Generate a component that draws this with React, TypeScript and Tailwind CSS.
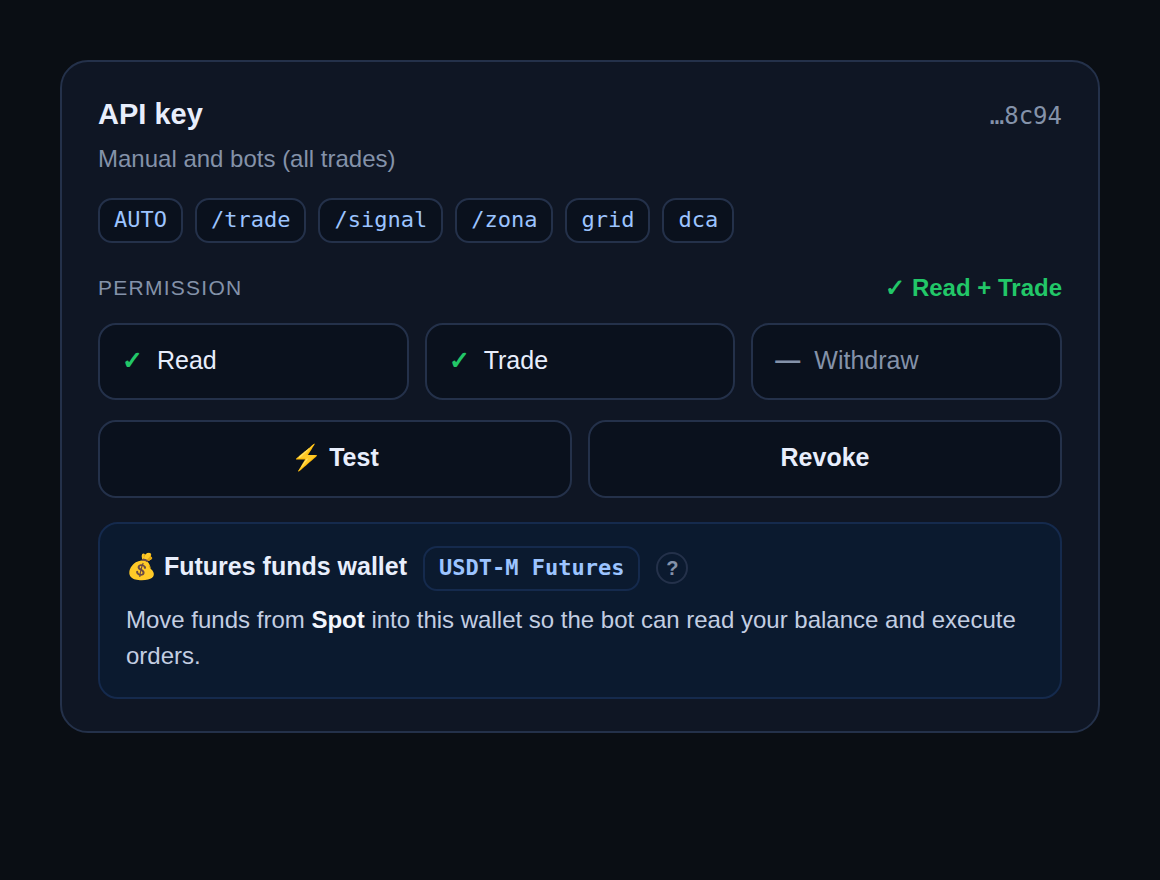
interface Permission {
  label: string;
  granted: boolean;
}

const commands = ["AUTO", "/trade", "/signal", "/zona", "grid", "dca"];

const permissions: Permission[] = [
  { label: "Read", granted: true },
  { label: "Trade", granted: true },
  { label: "Withdraw", granted: false },
];

const mono = "font-['DejaVu_Sans_Mono',monospace]";

function PermissionItem({ label, granted }: Permission) {
  return (
    <li
      className={`flex items-center gap-3.5 rounded-[18px] border-2 border-[#24314a] bg-[#0a111d] px-[22px] pb-6 pt-[21px] text-[25px] leading-7 ${
        granted ? "text-[#e8eefc]" : "text-[#8492a9]"
      }`}
    >
      <span className={granted ? "font-bold text-[#22c768]" : "font-bold"}>{granted ? "✓" : "—"}</span>
      {label}
    </li>
  );
}

function ActionButton({ children }: { children: string }) {
  return (
    <button
      type="button"
      className="rounded-[18px] border-2 border-[#24314a] bg-[#0a111d] px-6 pb-[25px] pt-[21px] text-[25px] font-bold leading-7 text-[#e8eefc]"
    >
      {children}
    </button>
  );
}

export default function App() {
  return (
    <main className="min-h-screen bg-[#0a0e14] p-[60px] font-['Liberation_Sans',Arial,sans-serif]">
      <section className="rounded-[28px] border-2 border-[#24314a] bg-[#0f1624] px-9 py-8">
        {/* Title row */}
        <div className="flex items-baseline justify-between">
          <h1 className="text-[29px] font-bold leading-10 text-[#e8eefc]">API key</h1>
          <span className={`${mono} text-2xl leading-9 text-[#8492a9]`}>…8c94</span>
        </div>
        <p className="mt-[7px] text-2xl leading-9 text-[#8492a9]">Manual and bots (all trades)</p>

        <ul className="mt-[21px] flex flex-wrap gap-3">
          {commands.map((command) => (
            <li
              key={command}
              className={`${mono} rounded-[14px] border-2 border-[#24314a] bg-[#0a111d] px-3.5 pb-2 pt-1.5 text-[22px] leading-[27px] text-[#9cc4ff]`}
            >
              {command}
            </li>
          ))}
        </ul>

        {/* Permissions */}
        <div className="mt-[27px] flex items-center justify-between leading-9">
          <h2 className="text-[21px] uppercase tracking-[0.06em] text-[#8492a9]">Permission</h2>
          <span className="text-2xl font-bold leading-9 text-[#22c768]">✓ Read + Trade</span>
        </div>
        <ul className="mt-[17px] grid grid-cols-3 gap-4">
          {permissions.map((permission) => (
            <PermissionItem key={permission.label} {...permission} />
          ))}
        </ul>

        <div className="mt-5 grid grid-cols-2 gap-4">
          <ActionButton>⚡ Test</ActionButton>
          <ActionButton>Revoke</ActionButton>
        </div>

        {/* Futures wallet hint */}
        <div className="mt-6 rounded-[20px] border-2 border-[#152a4d] bg-[#0b1a2f] px-[26px] pb-[23px] pt-[22px]">
          <div className="flex flex-wrap items-baseline gap-4">
            <h2 className="text-[25px] font-bold leading-9 text-[#e8eefc]">💰 Futures funds wallet</h2>
            <span
              className={`${mono} rounded-[14px] border-2 border-[#152a4d] px-3.5 pb-2 pt-1.5 text-[22px] font-bold leading-[27px] text-[#9cc4ff]`}
            >
              USDT-M Futures
            </span>
            <button
              type="button"
              aria-label="About the futures wallet"
              className="flex size-8 items-center justify-center rounded-full border-2 border-[#24314a] text-xl font-bold text-[#8492a9]"
            >
              ?
            </button>
          </div>
          <p className="mt-[11px] text-2xl leading-9 text-[#c3cee2]">
            Move funds from <strong className="text-[#f3f6fd]">Spot</strong> into this wallet so the bot can read your
            balance and execute orders.
          </p>
        </div>
      </section>
    </main>
  );
}
